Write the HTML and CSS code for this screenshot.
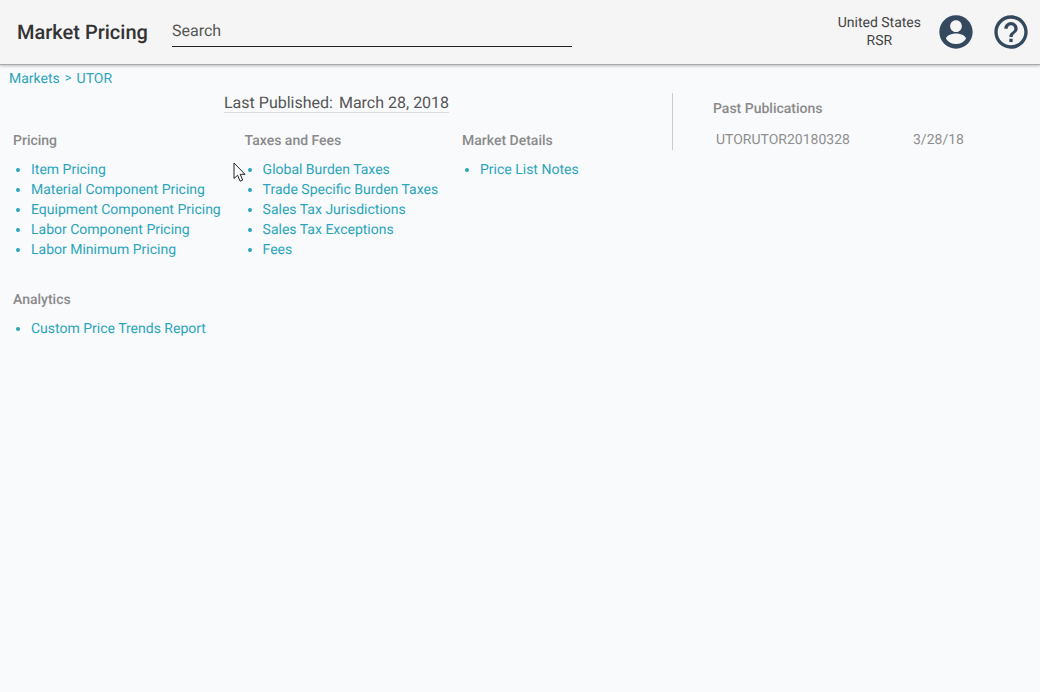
FILE: index.html
```html
<!DOCTYPE html>
<html lang="en">
<head>
<meta charset="utf-8">
<title>Market Pricing</title>
<link rel="stylesheet" href="styles.css">
</head>
<body>
<header class="topbar">
  <h1 class="title">Market Pricing</h1>
  <div class="search">Search</div>
  <div class="locale"><div>United States</div><div>RSR</div></div>
  <svg class="icon icon-user" viewBox="0 0 24 24"><path d="M12 2C6.48 2 2 6.48 2 12s4.48 10 10 10 10-4.48 10-10S17.52 2 12 2zm0 3c1.93 0 3.5 1.57 3.5 3.5S13.93 12 12 12s-3.5-1.57-3.5-3.5S10.07 5 12 5zm0 14.2c-2.5 0-4.71-1.28-6-3.22.03-1.99 4-3.08 6-3.08s5.97 1.09 6 3.08c-1.29 1.94-3.5 3.22-6 3.22z"/></svg>
  <svg class="icon icon-help" viewBox="0 0 24 24"><path d="M11 18h2v-2h-2v2zm1-16C6.48 2 2 6.48 2 12s4.48 10 10 10 10-4.48 10-10S17.52 2 12 2zm0 18c-4.41 0-8-3.59-8-8s3.59-8 8-8 8 3.59 8 8-3.59 8-8 8zm0-14c-2.21 0-4 1.79-4 4h2c0-1.1.9-2 2-2s2 .9 2 2c0 2-3 1.75-3 5h2c0-2.25 3-2.5 3-5 0-2.21-1.79-4-4-4z"/></svg>
</header>
<nav class="crumbs"><a>Markets</a><span class="sep">&gt;</span><a>UTOR</a></nav>
<main class="content">
  <section class="left">
    <div class="published-row"><div class="published"><span>Last Published:</span><span>March 28, 2018</span></div></div>
    <div class="columns">
      <div class="col col-pricing">
        <h2>Pricing</h2>
        <ul>
          <li><a>Item Pricing</a></li>
          <li><a>Material Component Pricing</a></li>
          <li><a>Equipment Component Pricing</a></li>
          <li><a>Labor Component Pricing</a></li>
          <li><a>Labor Minimum Pricing</a></li>
        </ul>
        <h2 class="second">Analytics</h2>
        <ul>
          <li><a>Custom Price Trends Report</a></li>
        </ul>
      </div>
      <div class="col col-taxes">
        <h2>Taxes and Fees</h2>
        <ul>
          <li><a>Global Burden Taxes</a></li>
          <li><a>Trade Specific Burden Taxes</a></li>
          <li><a>Sales Tax Jurisdictions</a></li>
          <li><a>Sales Tax Exceptions</a></li>
          <li><a>Fees</a></li>
        </ul>
      </div>
      <div class="col col-details">
        <h2>Market Details</h2>
        <ul>
          <li><a>Price List Notes</a></li>
        </ul>
      </div>
    </div>
  </section>
  <aside class="past">
    <h2>Past Publications</h2>
    <div class="pub-row"><span class="pub-id">UTORUTOR20180328</span><span>3/28/18</span></div>
  </aside>
</main>
<svg class="cursor" viewBox="0 0 14 21" width="14" height="21"><path d="M1 1v15.5l3.6-3.3 2.5 6 2.6-1.1-2.5-5.8H12z" fill="#fff" stroke="#222" stroke-width="1"/></svg>
</body>
</html>
```
FILE: styles.css
```css
* { box-sizing: border-box; }
html, body { margin: 0; padding: 0; height: 100%; }
body {
  background: #f9fafc;
  font-family: Roboto, "Liberation Sans", sans-serif;
  font-size: 14px;
  color: #333;
  overflow: hidden;
  position: relative;
  text-rendering: geometricPrecision;
}
.topbar {
  height: 65px;
  background: #f5f5f5;
  border-bottom: 1px solid #a9a9a9;
  box-shadow: 0 1px 3px rgba(0,0,0,.25);
  display: flex;
  align-items: center;
  padding: 0 9px 0 17px;
}
.title {
  margin: 0 24px 0 0;
  font-size: 20px;
  font-weight: 500;
  color: #333;
  width: 131px;
  white-space: nowrap;
}
.search {
  width: 400px;
  height: 32px;
  margin-top: -2px;
  font-size: 16px;
  line-height: 32px;
  color: #555;
  border-bottom: 1px solid #222;
}
.locale {
  margin-left: auto;
  margin-right: 15px;
  text-align: center;
  line-height: 18px;
  color: #444;
}
.icon { width: 40px; height: 40px; fill: #34495e; flex: none; }
.icon-help { margin-left: 15px; }
.crumbs {
  height: 20px;
  margin-top: 4px;
  padding-left: 9px;
  line-height: 20px;
  display: flex;
  gap: 5px;
  color: #2ba5ba;
}
.sep { font-size: 13px; }
.content { display: flex; }
.left { width: 672px; }
.published-row { padding-left: 224px; height: 36px; padding-top: 4px; }
.published {
  display: inline-flex;
  gap: 6px;
  font-size: 16px;
  line-height: 19px;
  color: #555;
  border-bottom: 1px solid #ddd;
}
.columns { display: flex; padding-top: 7px; }
h2 { margin: 0; font-size: 14px; font-weight: 500; color: #8a8a8a; line-height: 18px; }
ul { margin: 10px 0 0; padding: 0 0 0 18px; list-style: disc; color: #2ba5ba; }
li { line-height: 20px; }
a { color: #2ba5ba; }
.col-pricing { width: 244.6px; padding-left: 13px; }
.col-taxes { width: 217.4px; }
.second { margin-top: 31px; }
.past {
  margin-top: 4px;
  height: 57px;
  border-left: 1px solid #ccc;
  padding: 7px 0 0 40px;
  width: 340px;
}
.pub-row { margin-top: 13px; padding-left: 3px; color: #8f8f8f; display: flex; line-height: 18px; }
.pub-id { width: 197px; }
.cursor { position: absolute; left: 233px; top: 162px; }
```
